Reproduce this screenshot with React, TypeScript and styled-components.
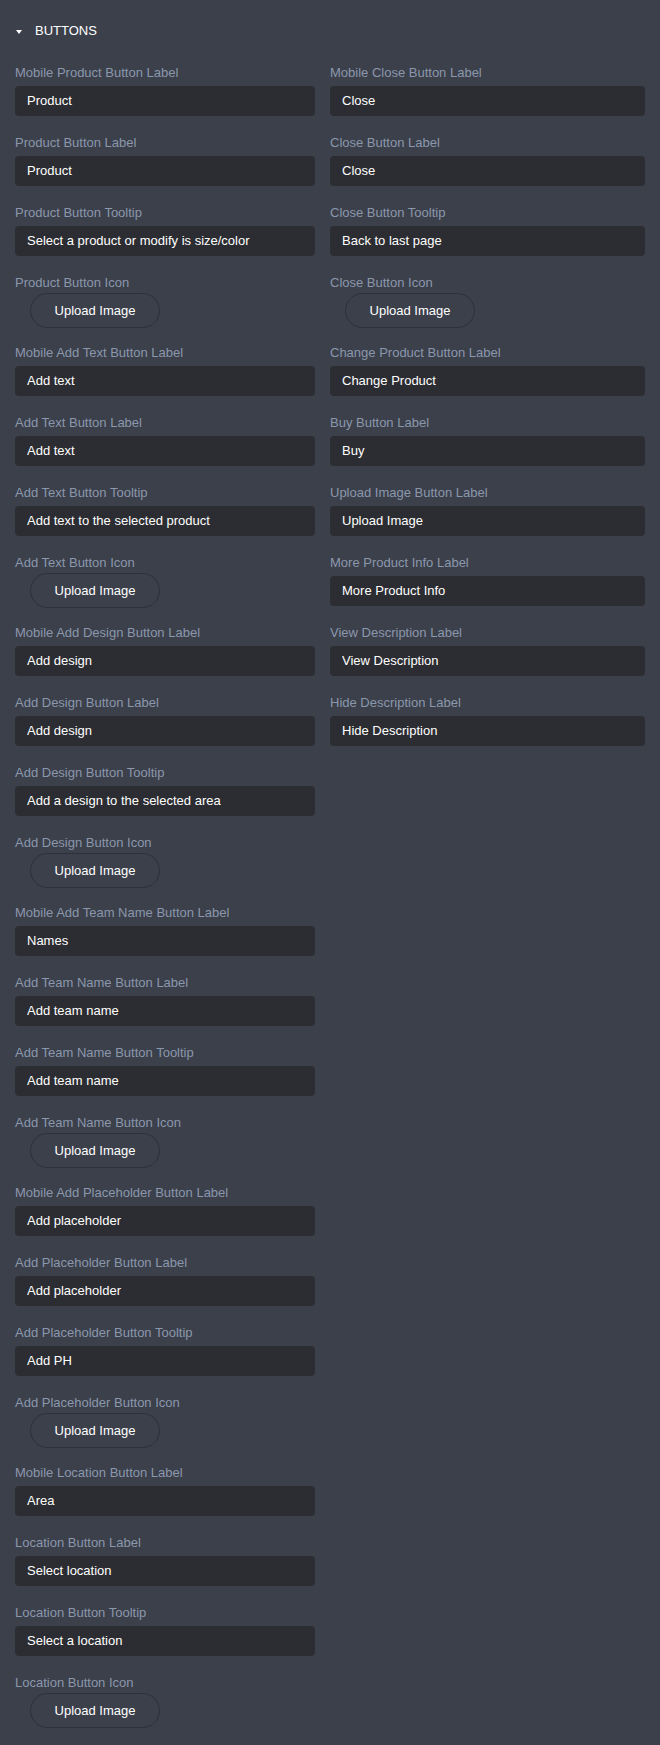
import React from 'react';
import styled, { createGlobalStyle } from 'styled-components';

type Field = { label: string; value?: string; upload?: boolean };

const leftFields: Field[] = [
  { label: 'Mobile Product Button Label', value: 'Product' },
  { label: 'Product Button Label', value: 'Product' },
  { label: 'Product Button Tooltip', value: 'Select a product or modify is size/color' },
  { label: 'Product Button Icon', upload: true },
  { label: 'Mobile Add Text Button Label', value: 'Add text' },
  { label: 'Add Text Button Label', value: 'Add text' },
  { label: 'Add Text Button Tooltip', value: 'Add text to the selected product' },
  { label: 'Add Text Button Icon', upload: true },
  { label: 'Mobile Add Design Button Label', value: 'Add design' },
  { label: 'Add Design Button Label', value: 'Add design' },
  { label: 'Add Design Button Tooltip', value: 'Add a design to the selected area' },
  { label: 'Add Design Button Icon', upload: true },
  { label: 'Mobile Add Team Name Button Label', value: 'Names' },
  { label: 'Add Team Name Button Label', value: 'Add team name' },
  { label: 'Add Team Name Button Tooltip', value: 'Add team name' },
  { label: 'Add Team Name Button Icon', upload: true },
  { label: 'Mobile Add Placeholder Button Label', value: 'Add placeholder' },
  { label: 'Add Placeholder Button Label', value: 'Add placeholder' },
  { label: 'Add Placeholder Button Tooltip', value: 'Add PH' },
  { label: 'Add Placeholder Button Icon', upload: true },
  { label: 'Mobile Location Button Label', value: 'Area' },
  { label: 'Location Button Label', value: 'Select location' },
  { label: 'Location Button Tooltip', value: 'Select a location' },
  { label: 'Location Button Icon', upload: true },
];

const rightFields: Field[] = [
  { label: 'Mobile Close Button Label', value: 'Close' },
  { label: 'Close Button Label', value: 'Close' },
  { label: 'Close Button Tooltip', value: 'Back to last page' },
  { label: 'Close Button Icon', upload: true },
  { label: 'Change Product Button Label', value: 'Change Product' },
  { label: 'Buy Button Label', value: 'Buy' },
  { label: 'Upload Image Button Label', value: 'Upload Image' },
  { label: 'More Product Info Label', value: 'More Product Info' },
  { label: 'View Description Label', value: 'View Description' },
  { label: 'Hide Description Label', value: 'Hide Description' },
];

const GlobalStyle = createGlobalStyle`
  html, body {
    margin: 0;
    padding: 0;
    background: #3b404b;
  }
  body {
    font-family: 'Liberation Sans', Arial, sans-serif;
  }
`;

const Panel = styled.div`
  width: 660px;
  min-height: 1745px;
  box-sizing: border-box;
  background: #3b404b;
  padding: 22px 15px 0 15px;
`;

const Header = styled.div`
  display: flex;
  align-items: center;
  height: 18px;
  line-height: 18px;
  color: #ffffff;
  font-size: 13px;
`;

const Caret = styled.span`
  width: 0;
  height: 0;
  margin: 1px 13px 0 1px;
  border-left: 3.5px solid transparent;
  border-right: 3.5px solid transparent;
  border-top: 4px solid #ffffff;
`;

const Columns = styled.div`
  display: grid;
  grid-template-columns: 300px 315px;
  column-gap: 15px;
  align-items: start;
  margin-top: 24px;
`;

const Column = styled.div`
  display: flex;
  flex-direction: column;
`;

const Item = styled.div`
  display: flex;
  flex-direction: column;
  height: 70px;
`;

const Label = styled.div`
  height: 18px;
  line-height: 18px;
  font-size: 13px;
  color: #8b97ab;
  white-space: nowrap;
`;

const TextInput = styled.input`
  box-sizing: border-box;
  width: 100%;
  height: 30px;
  margin-top: 4px;
  padding: 0 12px 1px;
  border: none;
  border-radius: 4px;
  background: #2c2d32;
  color: #ffffff;
  font-family: inherit;
  font-size: 13px;
  outline: none;
`;

const UploadButton = styled.button`
  box-sizing: border-box;
  width: 130px;
  height: 35px;
  margin: 1px 0 0 15px;
  padding: 0 0 1px;
  border: 1px solid #2d3039;
  border-radius: 18px;
  background: transparent;
  color: #ffffff;
  font-family: inherit;
  font-size: 13px;
  cursor: pointer;
`;

const FieldList: React.FC<{ fields: Field[] }> = ({ fields }) => (
  <Column>
    {fields.map(f => (
      <Item key={f.label}>
        <Label>{f.label}</Label>
        {f.upload ? (
          <UploadButton type="button">Upload Image</UploadButton>
        ) : (
          <TextInput type="text" defaultValue={f.value} />
        )}
      </Item>
    ))}
  </Column>
);

const App: React.FC = () => (
  <>
    <GlobalStyle />
    <Panel>
      <Header>
        <Caret />
        BUTTONS
      </Header>
      <Columns>
        <FieldList fields={leftFields} />
        <FieldList fields={rightFields} />
      </Columns>
    </Panel>
  </>
);

export default App;
